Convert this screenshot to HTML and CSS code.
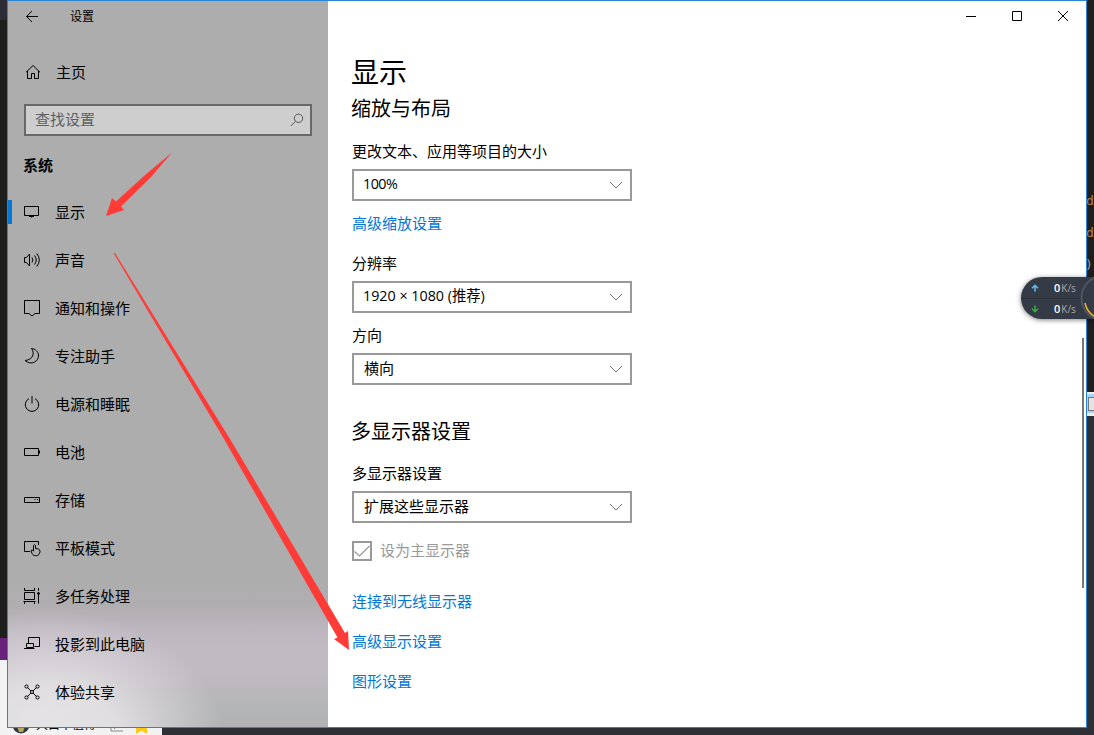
FILE: index.html
```html
<!DOCTYPE html>
<html lang="zh-CN">
<head>
<meta charset="utf-8">
<title>设置</title>
<link rel="stylesheet" href="styles.css">
</head>
<body>
<div class="desktop">
  <div class="editor-tab"></div>
  <div class="editor-statusbar"></div>
  <div class="chat-strip">
    <svg class="avatar" width="18" height="18" viewBox="0 0 18 18"><circle cx="9" cy="9" r="8.500" fill="#303b40"/><path d="M5 10h8l-2 6H7z" fill="#bba761"/></svg>
    <span>大白不值得</span>
    <svg class="note" width="14" height="14" viewBox="0 0 14 14"><path d="M1 1v12h12M4 11l7-6"/></svg>
    <svg class="star" width="11" height="14" viewBox="0 0 11 14"><path d="M0 0h11v14L5.500 10.500 0 14z" fill="#ffc61c"/></svg>
  </div>
  <div class="code-strip"><span class="code-a">d</span><span class="code-b">d</span><span class="code-c">)</span></div>
  <div class="scroll-strip"><i></i></div>

  <div class="window">
    <aside class="sidebar">
      <header class="titlebar">
        <svg width="16" height="16" viewBox="0 0 16 16"><path d="M14 7.500H2.500M8 2L2.500 7.500 8 13"/></svg>
        <span>设置</span>
      </header>
      <a class="home">
        <svg width="16" height="16" viewBox="0 0 16 16"><path d="M1 8.300L8 1.500l7 6.800M2.500 7v7.500h4V9.500h3v5h4V7"/></svg>
        <span>主页</span>
      </a>
      <div class="search">
        <span>查找设置</span>
        <svg width="14" height="14" viewBox="0 0 14 14"><circle cx="8.500" cy="5.300" r="4.200"/><path d="M5.500 8.300L.8 13"/></svg>
      </div>
      <h3 class="group">系统</h3>
      <nav class="nav">
        <a class="item active"><svg width="18" height="18" viewBox="0 0 18 18"><path d="M1.500 3.500h14v9h-14zM8.500 12.500v2M6 13.500h5"/></svg><span>显示</span></a>
        <a class="item"><svg width="18" height="18" viewBox="0 0 18 18"><path d="M1.500 6.500h2l3-3.500v12l-3-3.500h-2zM9 6.500q1.800 2.500 0 5M11.500 4.500q3.500 4.500 0 9M13.800 2.500q5 6.500 0 13"/></svg><span>声音</span></a>
        <a class="item"><svg width="18" height="18" viewBox="0 0 18 18"><path d="M1.500 1.500h15v13h-4.500L9 17l-3-2.500H1.500z"/></svg><span>通知和操作</span></a>
        <a class="item"><svg width="18" height="18" viewBox="0 0 18 18"><path d="M8.500 1.500C12 6 10 13 2 13.500c6 5.500 14 1 13.500-5.500C15.200 4.500 12.500 2 8.500 1.500z"/></svg><span>专注助手</span></a>
        <a class="item"><svg width="18" height="18" viewBox="0 0 18 18"><path d="M6 3.700a6.700 6.700 0 1 0 6 0M9 1v7.500"/></svg><span>电源和睡眠</span></a>
        <a class="item"><svg width="18" height="18" viewBox="0 0 18 18"><path d="M1.500 5.500h14v7h-14zM16.500 7.500v3"/></svg><span>电池</span></a>
        <a class="item"><svg width="18" height="18" viewBox="0 0 18 18"><path d="M1.500 6.500h15v5h-15zM11.500 8.500h1M14 8.500h1"/></svg><span>存储</span></a>
        <a class="item"><svg width="18" height="18" viewBox="0 0 18 18"><path d="M7 12.500H1.500v-10h14V6M10.500 12V6.500q1-1.800 2 0V9.500l3 .5q1.500.5 1.500 2.500c0 5-6.500 5.500-8 2L8 11.500q1-1.200 2.500.5"/></svg><span>平板模式</span></a>
        <a class="item"><svg width="18" height="18" viewBox="0 0 18 18"><path d="M1.500 5.500h10v7h-10zM1.500 1v2.500h10V1M.5 14.500h12M1.500 14.500V17M11.500 14.500V17M15.500 1v3M15.500 8v8.500"/><circle cx="15.500" cy="6.500" r="1" fill="#000"/></svg><span>多任务处理</span></a>
        <a class="item"><svg width="18" height="18" viewBox="0 0 18 18"><path d="M5.500 8.500v-6h11v9h-5M3.500 8.500h7v4h-7zM1 13.500h10.500"/></svg><span>投影到此电脑</span></a>
        <a class="item"><svg width="18" height="18" viewBox="0 0 18 18"><path d="M4.600 4.600l3.300 3.300M10.100 10.100l3.300 3.300M13.400 4.600l-3.300 3.300M7.900 10.100l-3.300 3.300"/><circle cx="3.500" cy="3.500" r="1.600"/><circle cx="14.500" cy="3.500" r="1.600"/><circle cx="3.500" cy="14.500" r="1.600"/><circle cx="14.500" cy="14.500" r="1.600"/><circle cx="9" cy="9" r="1.500"/></svg><span>体验共享</span></a>
      </nav>
    </aside>

    <main class="content">
      <div class="controls">
        <svg width="12" height="12" viewBox="0 0 12 12"><path d="M1 6.500h10"/></svg>
        <svg width="12" height="12" viewBox="0 0 12 12"><path d="M1.500 1.500h9v9h-9z"/></svg>
        <svg width="12" height="12" viewBox="0 0 12 12"><path d="M1 1l10 10M11 1L1 11"/></svg>
      </div>
      <h1>显示</h1>
      <h2>缩放与布局</h2>
      <section class="field scale">
        <label>更改文本、应用等项目的大小</label>
        <div class="select"><span class="percent">100%</span><svg width="14" height="8" viewBox="0 0 14 8"><path d="M1 1l6 6 6-6"/></svg></div>
        <a class="link">高级缩放设置</a>
      </section>
      <section class="field resolution">
        <label>分辨率</label>
        <div class="select"><span>1920 × 1080 (推荐)</span><svg width="14" height="8" viewBox="0 0 14 8"><path d="M1 1l6 6 6-6"/></svg></div>
      </section>
      <section class="field direction">
        <label>方向</label>
        <div class="select"><span class="cjk">横向</span><svg width="14" height="8" viewBox="0 0 14 8"><path d="M1 1l6 6 6-6"/></svg></div>
      </section>
      <h2 class="multi-title">多显示器设置</h2>
      <section class="field multi">
        <label>多显示器设置</label>
        <div class="select"><span class="cjk">扩展这些显示器</span><svg width="14" height="8" viewBox="0 0 14 8"><path d="M1 1l6 6 6-6"/></svg></div>
      </section>
      <div class="check"><svg width="20" height="20" viewBox="0 0 20 20"><path d="M1 1h18v18H1z" stroke-width="2"/><path d="M2.500 10.500l5 4.500L17.500 5" stroke-width="1.200"/></svg><span>设为主显示器</span></div>
      <div class="links">
        <a class="link">连接到无线显示器</a>
        <a class="link">高级显示设置</a>
        <a class="link">图形设置</a>
      </div>
      <div class="scrollbar"></div>
    </main>
  </div>

  <div class="netmeter">
    <div class="rate"><svg class="up" width="8" height="8" viewBox="0 0 8 8"><path d="M4 7.500V1.500M1 4.300l3-3 3 3"/></svg><b>0</b><span>K/s</span></div>
    <div class="rate"><svg class="down" width="8" height="8" viewBox="0 0 8 8"><path d="M4 .5v6M1 3.700l3 3 3-3"/></svg><b>0</b><span>K/s</span></div>
  </div>
  <svg class="gauge" width="14" height="46" viewBox="0 0 14 46"><circle cx="24" cy="23" r="22.500" fill="#343a46" stroke="#50555f" stroke-width="2"/><path d="M5 28Q7 37 14 41" fill="none" stroke="#f0b429" stroke-width="1.500"/></svg>

  <svg class="arrows" width="1094" height="735" viewBox="0 0 1094 735">
    <path d="M172 152.500L151 177 121 206.500 124 210 106 216 112 198 116 201.500 145 175z"/>
    <path d="M113.500 253L115 253 230 439 345 633 348 631 349 650 334 639 337.500 637.500 224 439z"/>
  </svg>
</div>
</body>
</html>
```
FILE: styles.css
```css
* { box-sizing: border-box; }
body {
  margin: 0;
  font: 15px/20px "Noto Sans CJK SC", sans-serif;
  color: #000;
}
h1, h2, h3 { margin: 0; font-weight: 400; }
svg { display: block; flex: none; fill: none; stroke: #000; stroke-width: 1; }

.desktop {
  position: relative;
  width: 1094px;
  height: 735px;
  padding-left: 7px;
  overflow: hidden;
  background: linear-gradient(#1e1e1e 0 415px, #2d3035 415px);
}
.editor-tab { position: absolute; left: 0; top: 0; width: 7px; height: 638px; background: linear-gradient(#2d2d35 0 20px, #1e1e1c 20px); }
.editor-statusbar { position: absolute; left: 0; top: 638px; width: 7px; height: 22px; background: #68217a; }
.chat-strip {
  position: absolute; left: 0; top: 660px; width: 162px; height: 75px;
  background: #f2f2f2; overflow: hidden;
  font-size: 12px;
}
.chat-strip > * { position: absolute; stroke: none; }
.chat-strip span { left: 36px; top: 55px; line-height: 18px; }
.avatar { left: 12px; top: 56px; }
.chat-strip .note { left: 110px; top: 58px; stroke: #888; }
.star { left: 136px; top: 60px; }
.code-strip { position: absolute; left: 1086px; top: 0; font: 13px/16px "DejaVu Sans Mono", monospace; color: #b08257; }
.code-strip span { position: absolute; left: 0; }
.code-a { top: 193px; }
.code-b { top: 225px; }
.code-strip .code-c { top: 257px; left: -1px; color: #9aa5ad; }
.scroll-strip {
  position: absolute; left: 1087px; top: 392px; width: 7px; height: 24px;
  background: linear-gradient(#eee 0 2px, #a8d4fa 2px 21px, #eee 21px);
}
.scroll-strip i { position: absolute; left: 1px; top: 5px; width: 8px; height: 14px; border: 1px solid #777; background: #e4e4e4; }

.window {
  position: relative;
  display: flex;
  width: 1080px;
  height: 728px;
  border: 1px solid #2986d5;
  background: #fff;
}

.sidebar {
  width: 320px;
  background:
    radial-gradient(ellipse 175px 125px at 40px 735px, #e6e5e6 0, rgba(228,226,229,.9) 40%, rgba(222,219,223,.6) 65%, rgba(215,212,217,0) 100%),
    linear-gradient(#adadad 0 575px, #b1aeb1 605px, #bdb6bf 630px, #c1bac3 655px, #bfb9c1 675px, #b6b6b8 700px, #b1b3b3 727px);
}
.titlebar { display: flex; align-items: center; gap: 30px; height: 31px; padding-left: 16px; font-size: 12px; }
.titlebar span { margin-top: -2px; }
.home { display: flex; align-items: center; gap: 15px; height: 40px; margin-top: 20px; padding-left: 17px; }
.search {
  display: flex; align-items: center; justify-content: space-between;
  width: 288px; height: 32px; margin: 12px 0 0 16px; padding: 0 6px 2px 9px;
  border: 2px solid #686868; background: #cecece; color: #606060;
}
.search svg { stroke: #555; margin-top: 2px; }
.group { margin: 19px 0 0 15px; font-size: 15px; line-height: 20px; font-weight: 700; }
.nav { margin-top: 13px; }
.item { display: flex; align-items: center; gap: 14px; height: 48px; padding-left: 15px; }
.item.active { background: linear-gradient(#0078d7, #0078d7) 0 50% / 4px 24px no-repeat; }

.content { position: relative; width: 758px; padding-left: 24px; }
.controls { display: flex; justify-content: flex-end; gap: 34px; height: 31px; padding: 9px 17px 0 0; }
h1 { margin: 19px 0 0 -1px; font-size: 28px; line-height: 40px; }
h2 { margin: 3px 0 0 -1px; font-size: 20px; line-height: 28px; }
label { display: block; line-height: 20px; }
.scale { margin-top: 19px; }
.select {
  display: flex; align-items: center; justify-content: space-between;
  width: 280px; height: 32px; margin-top: 8px; padding: 0 7px 2px 9px;
  border: 2px solid #999;
  font-family: "Open Sans", "Noto Sans CJK SC", sans-serif;
  font-size: 14.3px;
}
.select .percent { letter-spacing: -.5px; }
.select .cjk { padding-left: 1px; margin-top: -1px; font-size: 15px; font-family: "Noto Sans CJK SC", sans-serif; }
.select svg { stroke: #777; margin-top: 2px; }
.link { display: block; line-height: 20px; color: #0078d7; }
.scale .link { margin-top: 12px; }
.resolution { margin-top: 20px; }
.direction { margin-top: 12px; }
.multi-title { margin-top: 32px; }
.multi { margin-top: 18px; }
.check { display: flex; align-items: center; gap: 8px; height: 20px; margin-top: 18px; color: #999; }
.check svg { stroke: #999; }
.check span { margin-top: -2px; }
.links { display: grid; gap: 20px; margin-top: 30px; }
.scrollbar { position: absolute; right: 2px; top: 337px; width: 2px; height: 250px; background: #777; }

.netmeter {
  position: absolute; left: 1021px; top: 277px; width: 73px; height: 42px;
  border-radius: 21px 0 0 21px;
  background: #343a46;
  box-shadow: 0 1px 5px rgba(0,0,0,.5);
}
.rate { display: flex; align-items: center; height: 21px; padding-left: 10px; color: #aaa; font: 10px/20px "Open Sans", sans-serif; }
.rate + .rate { border-top: 1px solid #2b3039; }
.rate svg { stroke-width: 1.6; }
.up { stroke: #62b8f5; }
.down { stroke: #35ad3c; }
.rate b { margin-left: 15px; color: #fff; font-size: 11px; font-weight: 600; }
.rate span { margin-left: 1px; }
.gauge { position: absolute; left: 1080px; top: 275px; }
.arrows { position: absolute; left: 0; top: 0; fill: #ff3b38; stroke: none; pointer-events: none; }
```
